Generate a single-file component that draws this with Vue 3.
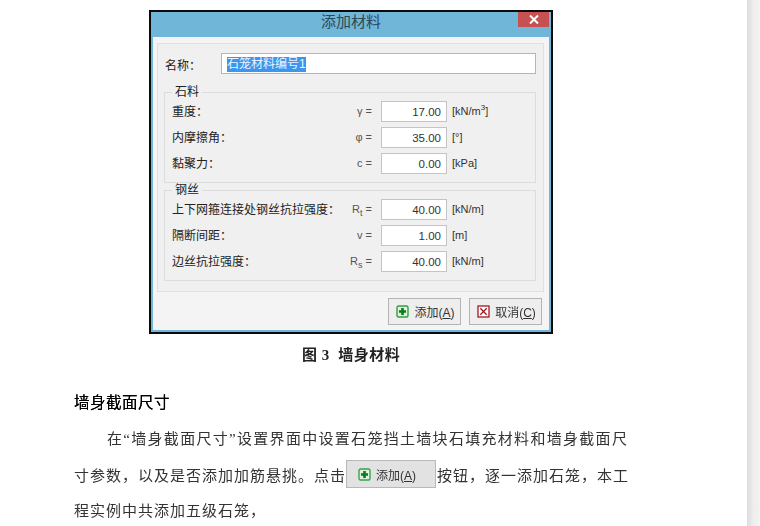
<script setup>
const groups = [
  { title: '石料', rows: [
    { label: '重度：', sym: 'γ', val: '17.00', unit: 'kN/m', sup: '3' },
    { label: '内摩擦角：', sym: 'φ', val: '35.00', unit: '°' },
    { label: '黏聚力：', sym: 'c', val: '0.00', unit: 'kPa' },
  ]},
  { title: '钢丝', rows: [
    { label: '上下网箍连接处钢丝抗拉强度：', sym: 'R', sub: 't', val: '40.00', unit: 'kN/m' },
    { label: '隔断间距：', sym: 'v', val: '1.00', unit: 'm' },
    { label: '边丝抗拉强度：', sym: 'R', sub: 's', val: '40.00', unit: 'kN/m' },
  ]},
]
</script>

<template>
  <div class="page">
    <main class="doc">
      <section class="dialog">
        <header class="titlebar">
          <span class="title">添加材料</span>
          <span class="close">
            <svg width="10" height="9" viewBox="0 0 10 9"><path d="M1 0.5 L9 8.5 M9 0.5 L1 8.5" stroke="#fff" stroke-width="2" fill="none"/></svg>
          </span>
        </header>
        <div class="body">
          <div class="panel">
            <div class="name-row">
              <span class="name-label">名称：</span>
              <div class="name-input"><span class="selected">石笼材料编号1</span></div>
            </div>
            <fieldset v-for="g in groups" :key="g.title" class="group">
              <legend>{{ g.title }}</legend>
              <div v-for="r in g.rows" :key="r.label" class="row">
                <span class="label">{{ r.label }}</span>
                <span class="sym">{{ r.sym }}<sub v-if="r.sub">{{ r.sub }}</sub> =</span>
                <span class="val">{{ r.val }}</span>
                <span class="unit">[{{ r.unit }}<sup v-if="r.sup">{{ r.sup }}</sup>]</span>
              </div>
            </fieldset>
          </div>
          <div class="actions">
            <button class="btn add">
              <svg width="13" height="13" viewBox="0 0 13 13"><rect x="1" y="1" width="11" height="11" rx="1.5" fill="#dff0df" stroke="#2f9e3f" stroke-width="1.4"/><path d="M6.5 3 V10 M3 6.5 H10" stroke="#0b7a1c" stroke-width="2.6"/></svg>
              <span>添加(<u>A</u>)</span>
            </button>
            <button class="btn cancel">
              <svg width="13" height="13" viewBox="0 0 13 13"><rect x="1" y="1" width="11" height="11" fill="#fff" stroke="#a3191f" stroke-width="1.3"/><path d="M3.3 3.3 L9.7 9.7 M9.7 3.3 L3.3 9.7" stroke="#a3191f" stroke-width="1.3"/></svg>
              <span>取消(<u>C</u>)</span>
            </button>
          </div>
        </div>
      </section>

      <p class="caption">图 3&nbsp;&nbsp;墙身材料</p>
      <h2 class="heading">墙身截面尺寸</h2>
      <p class="para">
        <span class="line first">在“墙身截面尺寸”设置界面中设置石笼挡土墙块石填充材料和墙身截面尺</span>
        <span class="line second">寸参数，以及是否添加加筋悬挑。点击<span class="inline-btn"><svg width="13" height="13" viewBox="0 0 13 13"><rect x="1" y="1" width="11" height="11" rx="1.5" fill="#dff0df" stroke="#35a547" stroke-width="1.4"/><path d="M6.5 3 V10 M3 6.5 H10" stroke="#0b7a1c" stroke-width="2.6"/></svg><span>添加(<u>A</u>)</span></span>按钮，逐一添加石笼，本工</span>
        <span class="line third">程实例中共添加五级石笼，</span>
      </p>
    </main>
    <aside class="gutter"></aside>
  </div>
</template>

<style>
html, body { margin: 0; background: #fff; }
</style>

<style scoped>
.page {
  width: 760px;
  height: 526px;
  display: flex;
  overflow: hidden;
  background: #fff;
  font-family: "Liberation Serif", "Noto Sans CJK SC", serif;
}
.doc { width: 747px; padding-top: 10px; box-sizing: border-box; filter: blur(0.3px); }
.gutter { width: 13px; background: linear-gradient(90deg, #dcdce0, #eeeeef 50%, #f3f3f3); }

.dialog {
  width: 404px;
  height: 324px;
  margin-left: 149px;
  box-sizing: border-box;
  border: 2px solid #0a0a0a;
  background: #70b6d8;
  padding: 0 2px 2px;
  display: flex;
  flex-direction: column;
  font-family: "Liberation Sans", "Noto Sans CJK SC", sans-serif;
  font-size: 12px;
  color: #222;
}
.titlebar {
  height: 25px;
  flex: none;
  box-sizing: border-box;
  padding-bottom: 5px;
  display: flex;
  justify-content: center;
  align-items: center;
  position: relative;
}
.title { font-size: 15px; line-height: 20px; color: #2f4855; }
.close {
  position: absolute;
  right: 0;
  top: 0;
  width: 31px;
  height: 15px;
  background: #c75050;
  display: flex;
  align-items: center;
  justify-content: center;
}
.body {
  flex: 1;
  background: #f4f4f4;
  padding: 6px 5px 0 4px;
  display: flex;
  flex-direction: column;
}
.panel {
  height: 249px;
  box-sizing: border-box;
  border: 1px solid #e0e0e0;
  background: #f0f0f0;
  padding: 9px 7px 0 6px;
}
.name-row { display: flex; align-items: center; height: 21px; margin-bottom: 11px; }
.name-label { width: 56px; padding-left: 1px; padding-top: 2px; font-size: 12px; }
.name-input {
  flex: 1;
  height: 21px;
  box-sizing: border-box;
  border: 1px solid #b5b5b5;
  background: #fff;
  padding: 2px 5px 0;
  display: flex;
  align-items: center;
  font-size: 12px;
}
.selected { background: #3a96ee; color: #eaf4ff; line-height: 15px; }
.group {
  margin: 0;
  padding: 2px 0 8px 7px;
  border: 1px solid #dcdcdc;
  min-width: 0;
}
.group legend {
  margin-left: 0;
  padding: 0 3px;
  font-size: 12px;
  line-height: 14px;
  height: 14px;
}
.row {
  display: grid;
  grid-template-columns: 170px 39px 66px auto;
  align-items: center;
  height: 21px;
  margin-bottom: 5px;
}
.row:last-child { margin-bottom: 0; }
.label { white-space: nowrap; font-size: 12px; padding-bottom: 2px; }
.sym {
  text-align: right;
  padding-right: 9px;
  font-size: 11px;
  color: #555;
  white-space: nowrap;
  padding-bottom: 2px;
}
.sym sub { font-size: 9px; line-height: 0; }
.val {
  height: 21px;
  box-sizing: border-box;
  border: 1px solid #c4c4c4;
  background: #fff;
  text-align: right;
  padding-right: 5px;
  font-size: 11.5px;
  line-height: 21px;
  color: #333;
}
.unit { margin-left: 5px; font-size: 11px; color: #333; white-space: nowrap; padding-bottom: 2px; }
.unit sup { font-size: 8px; line-height: 0; }

.actions { display: flex; justify-content: flex-end; gap: 8px; margin-top: 6px; padding-right: 2px; }
.btn {
  width: 73px;
  height: 27px;
  border: 1px solid #b4b4b4;
  background: #eeeeee;
  display: flex;
  align-items: center;
  justify-content: center;
  gap: 5px;
  padding: 0 0 0 2px;
  font-family: inherit;
  font-size: 12px;
  color: #333;
}
.caption {
  margin: 11px 0 0 302px;
  font-size: 15px;
  line-height: 20px;
  font-weight: 700;
  color: #222;
  letter-spacing: 0.5px;
  font-family: "Liberation Serif", "Noto Sans CJK SC", serif;
}
.heading {
  margin: 27px 0 0 74px;
  font-size: 15.5px;
  line-height: 22px;
  font-weight: 400;
  color: #000;
  letter-spacing: 0.5px;
  text-shadow: 0 0 0.5px #000;
}
.para { margin: 0 0 0 74px; font-size: 15px; color: #333; }
.line { display: block; white-space: nowrap; letter-spacing: 1px; }
.first { padding-left: 33px; margin-top: 12px; line-height: 26px; letter-spacing: 1.3px; }
.second { display: flex; align-items: center; margin-top: 7px; height: 30px; }
.third { margin-top: 9px; line-height: 26px; }
.inline-btn {
  width: 90px;
  height: 28px;
  margin: 0 1px 0 0;
  box-sizing: border-box;
  border: 1px solid #b8b8b8;
  background: #e2e2e2;
  display: inline-flex;
  align-items: center;
  gap: 5px;
  padding-left: 11px;
  font-family: "Liberation Sans", "Noto Sans CJK SC", sans-serif;
  font-size: 12px;
  letter-spacing: 0;
  color: #333;
}
</style>
